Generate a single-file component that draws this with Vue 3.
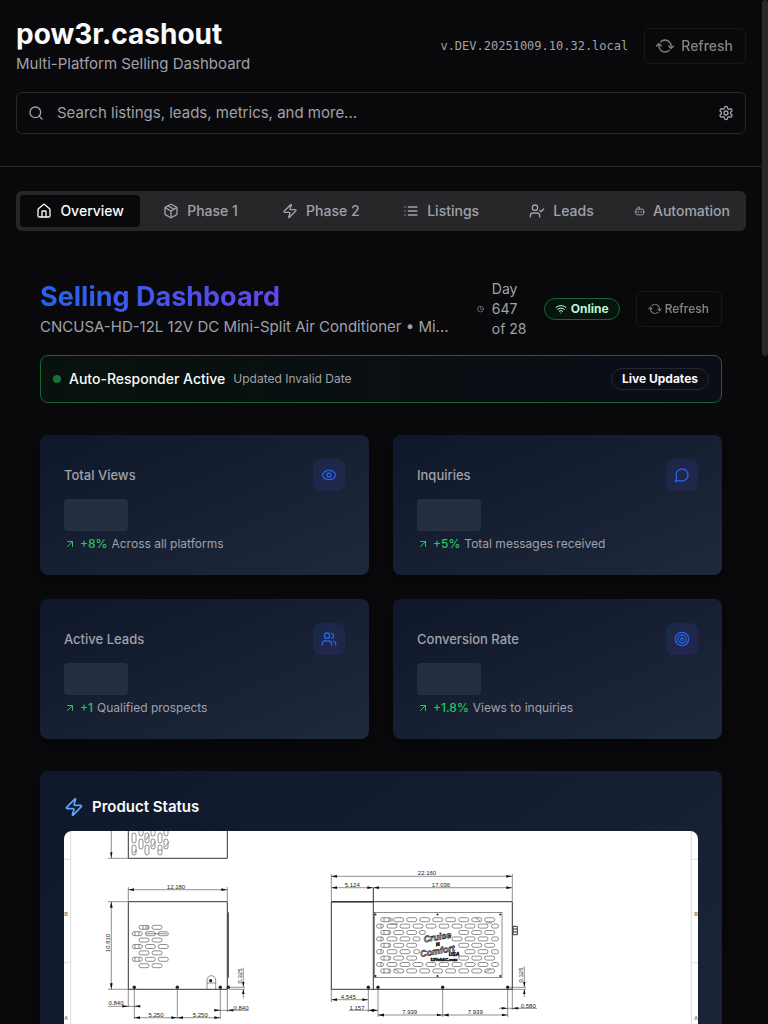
<script setup>
import { ref } from 'vue'

const icons = {
  home: '<path d="M15 21v-8a1 1 0 0 0-1-1h-4a1 1 0 0 0-1 1v8"/><path d="M3 10a2 2 0 0 1 .709-1.528l7-5.999a2 2 0 0 1 2.582 0l7 5.999A2 2 0 0 1 21 10v9a2 2 0 0 1-2 2H5a2 2 0 0 1-2-2z"/>',
  package: '<path d="M11 21.73a2 2 0 0 0 2 0l7-4A2 2 0 0 0 21 16V8a2 2 0 0 0-1-1.73l-7-4a2 2 0 0 0-2 0l-7 4A2 2 0 0 0 3 8v8a2 2 0 0 0 1 1.73z"/><path d="M12 22V12"/><path d="m3.3 7 8.7 5 8.7-5"/><path d="m7.5 4.27 9 5.15"/>',
  zap: '<path d="M4 14a1 1 0 0 1-.78-1.63l9.9-10.2a.5.5 0 0 1 .86.46l-1.92 6.02A1 1 0 0 0 13 10h7a1 1 0 0 1 .78 1.63l-9.9 10.2a.5.5 0 0 1-.86-.46l1.92-6.02A1 1 0 0 0 11 14z"/>',
  list: '<path d="M3 12h.01M3 18h.01M3 6h.01M8 12h13M8 18h13M8 6h13"/>',
  userCheck: '<path d="m16 11 2 2 4-4"/><path d="M16 21v-2a4 4 0 0 0-4-4H6a4 4 0 0 0-4 4v2"/><circle cx="9" cy="7" r="4"/>',
  bot: '<path d="M12 8V4H8"/><rect width="16" height="12" x="4" y="8" rx="2"/><path d="M2 14h2M20 14h2M15 13v2M9 13v2"/>',
  search: '<circle cx="11" cy="11" r="8"/><path d="m21 21-4.3-4.3"/>',
  settings: '<path d="M12.22 2h-.44a2 2 0 0 0-2 2v.18a2 2 0 0 1-1 1.73l-.43.25a2 2 0 0 1-2 0l-.15-.08a2 2 0 0 0-2.73.73l-.22.38a2 2 0 0 0 .73 2.73l.15.1a2 2 0 0 1 1 1.72v.51a2 2 0 0 1-1 1.74l-.15.09a2 2 0 0 0-.73 2.73l.22.38a2 2 0 0 0 2.73.73l.15-.08a2 2 0 0 1 2 0l.43.25a2 2 0 0 1 1 1.73V20a2 2 0 0 0 2 2h.44a2 2 0 0 0 2-2v-.18a2 2 0 0 1 1-1.73l.43-.25a2 2 0 0 1 2 0l.15.08a2 2 0 0 0 2.73-.73l.22-.39a2 2 0 0 0-.73-2.73l-.15-.08a2 2 0 0 1-1-1.74v-.5a2 2 0 0 1 1-1.74l.15-.09a2 2 0 0 0 .73-2.73l-.22-.38a2 2 0 0 0-2.73-.73l-.15.08a2 2 0 0 1-2 0l-.43-.25a2 2 0 0 1-1-1.73V4a2 2 0 0 0-2-2z"/><circle cx="12" cy="12" r="3"/>',
  refresh: '<path d="M3 12a9 9 0 0 1 9-9 9.75 9.75 0 0 1 6.74 2.74L21 8"/><path d="M21 3v5h-5"/><path d="M21 12a9 9 0 0 1-9 9 9.75 9.75 0 0 1-6.74-2.74L3 16"/><path d="M8 16H3v5"/>',
  clock: '<circle cx="12" cy="12" r="10"/><path d="M12 6v6l4 2"/>',
  wifi: '<path d="M12 20h.01"/><path d="M2 8.82a15 15 0 0 1 20 0"/><path d="M5 12.859a10 10 0 0 1 14 0"/><path d="M8.5 16.429a5 5 0 0 1 7 0"/>',
  arrow: '<path d="M7 7h10v10"/><path d="M7 17 17 7"/>',
  eye: '<path d="M2.062 12.348a1 1 0 0 1 0-.696 10.75 10.75 0 0 1 19.876 0 1 1 0 0 1 0 .696 10.75 10.75 0 0 1-19.876 0"/><circle cx="12" cy="12" r="3"/>',
  message: '<path d="M7.9 20A9 9 0 1 0 4 16.1L2 22Z"/>',
  users: '<path d="M16 21v-2a4 4 0 0 0-4-4H6a4 4 0 0 0-4 4v2"/><circle cx="9" cy="7" r="4"/><path d="M22 21v-2a4 4 0 0 0-3-3.87"/><path d="M16 3.13a4 4 0 0 1 0 7.75"/>',
  target: '<circle cx="12" cy="12" r="10"/><circle cx="12" cy="12" r="6"/><circle cx="12" cy="12" r="2"/>',
}

const tabs = [
  { label: 'Overview', icon: 'home' },
  { label: 'Phase 1', icon: 'package' },
  { label: 'Phase 2', icon: 'zap' },
  { label: 'Listings', icon: 'list' },
  { label: 'Leads', icon: 'userCheck' },
  { label: 'Automation', icon: 'bot' },
]
const active = ref('Overview')
const query = ref('')

const stats = [
  { title: 'Total Views', change: '+8%', note: 'Across all platforms', icon: 'eye' },
  { title: 'Inquiries', change: '+5%', note: 'Total messages received', icon: 'message' },
  { title: 'Active Leads', change: '+1', note: 'Qualified prospects', icon: 'users' },
  { title: 'Conversion Rate', change: '+1.8%', note: 'Views to inquiries', icon: 'target' },
]

/* Vent slots: centre x, centre y, width, height */
const slots = []
for (const [x, y] of [[70, 7], [83, 7], [96, 7], [70, 19], [83, 19], [96, 19], [77, 0], [89, 0], [102, 0], [77, 13], [89, 13], [102, 13]]) {
  slots.push([x, y, 4, 10])
}
for (let r = 0; r < 7; r++) {
  const xs = r % 2 ? [73.3, 86.3, 99.3] : [80, 93]
  xs.forEach((x) => slots.push([x, 96.3 + r * 6.4, 10, 4]))
}
/* Slots left out behind the brand mark, by row */
const gaps = { 2: [3, 4, 5], 3: [2, 3, 4], 4: [3, 4, 5], 5: [2, 3, 4, 5], 6: [3, 4, 5] }
for (let r = 0; r < 9; r++) {
  const y = 88.7 + r * 6.4
  const even = r % 2 === 0
  const skip = gaps[r] || []
  for (let i = 0; i < (even ? 9 : 8); i++) {
    if (!skip.includes(i)) slots.push([(even ? 321.7 : 328) + 13 * i, y, 10, 4])
  }
  if (!even) {
    slots.push([316, y, 7, 4])
    slots.push([431, y, 7, 4])
  }
}
slots.push([358.3, 101.5, 6, 4], [352.5, 107.9, 7, 4], [352.5, 120.7, 6, 4])

/* Dimension lines with an arrow at both ends: x1, y1, x2, y2 */
const dims = [
  [64.3, 58.7, 163.3, 58.7], [47.3, 70.7, 47.3, 158.3],
  [70.3, 186.7, 113.3, 186.7], [113.3, 186.7, 156.3, 186.7],
  [267.3, 45.3, 448.3, 45.3], [267.3, 56.7, 309.3, 56.7], [309.3, 56.7, 448.3, 56.7],
  [267.3, 168.7, 304.3, 168.7], [314, 184, 378.7, 184], [378.7, 184, 443.7, 184],
  [304.3, 179.3, 314, 179.3],
]
const feet = [70.3, 113.3, 156.3, 164.3, 304.3, 314, 378.7, 443.7]
const labels = [
  ['12.180', 112, 58], ['5.250', 92, 186], ['5.250', 136.3, 186], ['0.840', 52, 174], ['0.840', 177, 178.5],
  ['22.160', 363, 44], ['5.124', 288.3, 56], ['17.036', 377, 56], ['4.545', 284.3, 168],
  ['1.157', 293, 178.5], ['7.939', 345.7, 183], ['7.939', 411.3, 183], ['0.580', 464.3, 176.5],
]
const upright = [['10.810', 46, 112], ['0.325', 178, 145], ['0.325', 459, 144]]
</script>

<template>
  <div class="shell">
    <header class="top">
      <div class="bar">
        <div>
          <h1>pow3r.cashout</h1>
          <p class="sub">Multi-Platform Selling Dashboard</p>
        </div>
        <div class="tools">
          <span class="version">v.DEV.20251009.10.32.local</span>
          <button class="btn" type="button" disabled>
            <svg class="ic spin" viewBox="0 0 24 24" v-html="icons.refresh" />Refresh
          </button>
        </div>
      </div>
      <div class="search">
        <svg class="ic" viewBox="0 0 24 24" v-html="icons.search" />
        <input v-model="query" type="text" aria-label="Search" placeholder="Search listings, leads, metrics, and more..." />
        <button class="gear" type="button" aria-label="Settings">
          <svg class="ic" viewBox="0 0 24 24" v-html="icons.settings" />
        </button>
      </div>
    </header>

    <main>
      <nav class="tabs" role="tablist">
        <button
          v-for="t in tabs" :key="t.label" type="button" role="tab"
          :aria-selected="active === t.label" :class="{ on: active === t.label }" @click="active = t.label"
        >
          <svg class="ic" viewBox="0 0 24 24" v-html="icons[t.icon]" /><span>{{ t.label }}</span>
        </button>
      </nav>

      <div class="board">
        <div class="intro">
          <div class="heading">
            <h2>Selling Dashboard</h2>
            <p class="sub">CNCUSA-HD-12L 12V DC Mini-Split Air Conditioner • Mi...</p>
          </div>
          <div class="day">
            <svg class="ic" viewBox="0 0 24 24" v-html="icons.clock" />
            <span>Day 647 of 28</span>
          </div>
          <span class="pill online"><svg class="ic" viewBox="0 0 24 24" v-html="icons.wifi" />Online</span>
          <button class="btn small" type="button" disabled>
            <svg class="ic spin" viewBox="0 0 24 24" v-html="icons.refresh" />Refresh
          </button>
        </div>

        <div class="banner">
          <i class="dot" />
          <strong>Auto-Responder Active</strong>
          <span class="when">Updated Invalid Date</span>
          <span class="pill live">Live Updates</span>
        </div>

        <section class="stats">
          <article v-for="s in stats" :key="s.title" class="card">
            <div class="head">
              <h3>{{ s.title }}</h3>
              <span class="badge"><svg class="ic" viewBox="0 0 24 24" v-html="icons[s.icon]" /></span>
            </div>
            <div class="skeleton" />
            <p class="foot">
              <svg class="ic" viewBox="0 0 24 24" v-html="icons.arrow" />
              <b>{{ s.change }}</b><span>{{ s.note }}</span>
            </p>
          </article>
        </section>

        <section class="card product">
          <h3><svg class="ic" viewBox="0 0 24 24" v-html="icons.zap" />Product Status</h3>
          <div class="photo">
            <svg class="drawing" viewBox="0 0 634 400" role="img" aria-label="Unit dimensions">
              <defs>
                <marker id="tip" viewBox="0 0 6 4" refX="6" refY="2" markerWidth="6" markerHeight="4" markerUnits="userSpaceOnUse" orient="auto-start-reverse">
                  <path d="M0 0.6 6 2 0 3.4z" fill="#111" />
                </marker>
              </defs>
              <g class="frame">
                <path d="M6.7 0V400M627.3 0V400M0 28.3H6.7M0 131.7H6.7M627.3 28.3H634M627.3 131.7H634" />
              </g>
              <g class="edge">
                <path d="M64.3 0V27.3H163.3V0M64.3 70.7H163.3V158.3H64.3zM164.3 81.3V146.7" />
                <path d="M267.3 70.7H448.3V158.3H267.3zM309.3 57V158.3" />
                <path d="M449 95.3h4.3v8.4h-4.3zM449 98h4.3M449 101h4.3" />
                <path d="M267.3 70.7H309.3" stroke-width="1.4" />
              </g>
              <g class="thin">
                <rect x="310.3" y="81.3" width="127.7" height="65.4" />
                <path d="M47.3 0V27.3M44 27.3H64M44 70.7H64M44 158.3H64M64.3 56V70M163.3 56V70M64.3 158V176M70.3 158V188M113.3 158V188M156.3 158V188M163.3 158V181" />
                <path d="M267.3 43V70M448.3 43V70M267.3 158V171M304.3 158V181M314 158V186M378.7 158V186M443.7 158V186M448.3 158V179" />
                <path d="M44 175.3H75M150 179.3H185M285 179.3H304M435 177.3H473" />
                <path d="M179.3 136.7V156M179.3 159V167.3M165 156.3H181M165 158.3H181M460.3 135.3V156M460.3 159V166M446 156.3H462M446 158.3H462" />
                <path d="M143 158v-9a4.3 4.3 0 0 1 8.7 0v9M143 152h8.7" />
                <path d="M79 94.500v4M82 94.500v4M84 94.500v4M71 100.700v4M75 100.700v4M71 113.500v4M75 113.500v4M71 126.500v4M75 126.500v4M82 102.700H103M69 22l4-3M82 9l3-5M88 16l3-5M101 16l4-5M94 19h4M325 86.500v4.400M328 86.500v4.400M320 86.500v4.400M325 99.300v4.400M320 99.300v4.400M325 112v4.400M320 112v4.400M325 125v4.400M320 125v4.400M325 138v4.400M320 138v4.400M317 93v4M317 106v4M317 118.500v4M317 131.500v4M335 141l-5-3M421 141l6-3M412 87l4 3M422 92h6M326 93h8" />
                <rect v-for="(s, i) in slots" :key="i" :x="s[0] - s[2] / 2" :y="s[1] - s[3] / 2" :width="s[2]" :height="s[3]" rx="2" />
                <path v-for="(d, i) in dims" :key="'d' + i" :d="`M${d[0]} ${d[1]}L${d[2]} ${d[3]}`" marker-start="url(#tip)" marker-end="url(#tip)" />
              </g>
              <path d="M46.1 21.3h2.400l-1.200 6zM58.300 174.100v2.400l6-1.200zM76.300 174.100v2.400l-6-1.200zM150.300 178.100v2.400l6-1.200zM169.300 178.100v2.400l-6-1.200zM437.700 176.100v2.400l6-1.200zM454.300 176.100v2.400l-6-1.200zM178.100 151h2.400l-1.200 5zM178.100 163h2.400l-1.200-5zM459.100 151h2.400l-1.200 5zM459.100 163h2.400l-1.200-5z" fill="#111" />
              <circle v-for="x in feet" :key="x" :cx="x" cy="156.3" r="1.7" fill="#222" />
              <circle cx="146.7" cy="149.7" r="1.6" fill="#222" />
              <g fill="#222">
                <circle cx="311.5" cy="83.5" r="1" /><circle cx="373.5" cy="83.5" r="1" /><circle cx="436.3" cy="83.5" r="1" />
                <circle cx="311.5" cy="145" r="1" /><circle cx="373.5" cy="145" r="1" /><circle cx="436.3" cy="145" r="1" />
              </g>
              <g class="num">
                <text v-for="(l, i) in labels" :key="i" :x="l[1]" :y="l[2]">{{ l[0] }}</text>
                <text v-for="(l, i) in upright" :key="'u' + i" :transform="`translate(${l[1]} ${l[2]}) rotate(-90)`">{{ l[0] }}</text>
              </g>
              <g class="mark">
                <text transform="translate(374 109) rotate(-10)">Cruise</text>
                <text transform="translate(374 115) rotate(-10)" class="mid">N</text>
                <text transform="translate(374 123) rotate(-10)">Comfort</text>
                <text x="390" y="125" class="mid">USA</text>
                <text x="380" y="130" class="site">12VoltAC.com</text>
              </g>
              <g class="zone">
                <text x="2" y="85">B</text><text x="2" y="189">A</text>
                <text x="632" y="85">B</text><text x="632" y="189">A</text>
              </g>
            </svg>
          </div>
        </section>
      </div>
    </main>
    <div class="thumb" />
  </div>
</template>

<style>
body {
  background: #09090b;
}
</style>

<style scoped>
* {
  box-sizing: border-box;
}
.shell {
  height: 100vh;
  overflow: hidden;
  padding-right: 6px;
  background: #09090b;
  color: #fafafa;
  font-family: Inter, "Liberation Sans", sans-serif;
  font-size: 14px;
  line-height: 20px;
}
h1, h2, h3, p {
  margin: 0;
}
button {
  font: inherit;
  color: inherit;
  background: none;
  border: 0;
  padding: 0;
}
.ic {
  width: 16px;
  height: 16px;
  fill: none;
  stroke: currentColor;
  stroke-width: 2;
  stroke-linecap: round;
  stroke-linejoin: round;
}
.top {
  padding: 16px 16px 32px;
  border-bottom: 1px solid #27272a;
}
.bar {
  display: flex;
  justify-content: space-between;
  align-items: center;
}
h1 {
  font-size: 28px;
  line-height: 36px;
  font-weight: 700;
}
.sub {
  font-size: 15px;
  line-height: 24px;
  color: #a1a1aa;
  white-space: nowrap;
}
.tools {
  display: flex;
  align-items: center;
  gap: 16px;
}
.version {
  font: 12px/16px "DejaVu Sans Mono", monospace;
  color: #a1a1aa;
}
.btn {
  display: flex;
  align-items: center;
  gap: 8px;
  height: 36px;
  padding: 0 12px;
  border: 1px solid #27272a;
  border-radius: 6px;
  font-weight: 500;
  opacity: 0.5;
}
.spin {
  transform: rotate(45deg);
  overflow: visible;
}
.search {
  display: flex;
  align-items: center;
  height: 42px;
  margin-top: 16px;
  padding: 0 11px;
  border: 1px solid #27272a;
  border-radius: 6px;
  color: #a1a1aa;
}
.search input {
  flex: 1;
  min-width: 0;
  margin-left: 13px;
  padding: 0;
  border: 0;
  outline: 0;
  background: none;
  color: #fafafa;
  font: inherit;
  font-size: 15px;
}
.search input::placeholder {
  color: #a1a1aa;
  opacity: 1;
}
.gear {
  display: flex;
}
main {
  padding: 24px 16px 0;
}
.tabs {
  display: grid;
  grid-template-columns: repeat(6, 1fr);
  height: 40px;
  padding: 4px;
  border-radius: 6px;
  background: #27272a;
  color: #a1a1aa;
}
.tabs button {
  display: flex;
  align-items: center;
  justify-content: center;
  gap: 8px;
  min-width: 0;
  padding: 0 12px;
  border-radius: 4px;
  font-weight: 500;
}
.tabs .ic {
  min-width: 0;
}
.tabs .on {
  background: #09090b;
  color: #fafafa;
}
.board {
  display: flex;
  flex-direction: column;
  padding: 48px 24px 0;
}
.intro {
  display: flex;
  align-items: center;
}
.heading {
  flex: 1;
  min-width: 0;
}
h2 {
  width: fit-content;
  font-size: 27px;
  line-height: 36px;
  font-weight: 700;
  background: linear-gradient(90deg, #2563eb, #7c3aed 140%);
  background-clip: text;
  -webkit-background-clip: text;
  color: transparent;
}
.day {
  display: flex;
  align-items: center;
  gap: 8px;
  margin: 0 16px;
  color: #a1a1aa;
}
.day span {
  width: 36px;
}
.day .ic {
  width: 7px;
}
.pill {
  display: flex;
  align-items: center;
  height: 22px;
  padding: 0 10px;
  border: 1px solid #27272a;
  border-radius: 11px;
  font-size: 12px;
  font-weight: 700;
}
.online {
  gap: 4px;
  margin-right: 16px;
  border-color: #166534;
  background: #07150e;
  color: #bbf7d0;
}
.online .ic {
  width: 12px;
  height: 12px;
}
.small {
  gap: 4px;
  font-size: 12px;
}
.small .ic {
  width: 12px;
  height: 12px;
}
.banner {
  display: flex;
  align-items: center;
  gap: 8px;
  height: 48px;
  margin-top: 16px;
  padding: 0 12px;
  border: 1px solid #166534;
  border-radius: 8px;
  background: linear-gradient(90deg, #08120d, #0c0d18);
}
.banner strong {
  font-weight: 500;
}
.dot {
  width: 8px;
  height: 8px;
  border-radius: 50%;
  background: #197138;
}
.when {
  font-size: 12px;
  color: #a1a1aa;
}
.live {
  margin-left: auto;
}
.stats {
  display: grid;
  grid-template-columns: 1fr 1fr;
  gap: 24px;
  margin-top: 32px;
}
.card {
  padding: 24px;
  border-radius: 8px;
  background: linear-gradient(to bottom right, #0f172a, #1e293b);
  box-shadow: 0 10px 15px -3px rgba(0, 0, 0, 0.1), 0 4px 6px -4px rgba(0, 0, 0, 0.1);
}
.head {
  display: flex;
  align-items: center;
  justify-content: space-between;
}
.head h3 {
  font-size: 13px;
  font-weight: 500;
  color: #a1a1aa;
}
.badge {
  display: flex;
  padding: 8px;
  border-radius: 8px;
  background: linear-gradient(135deg, rgba(37, 99, 235, 0.12), rgba(124, 58, 237, 0.12));
  color: #2563eb;
}
.skeleton {
  width: 64px;
  height: 32px;
  margin-top: 8px;
  border-radius: 4px;
  background: #243041;
}
.foot {
  display: flex;
  align-items: center;
  gap: 4px;
  margin-top: 5px;
  margin-bottom: -1px;
  font-size: 12px;
  line-height: 16px;
  color: #a1a1aa;
}
.foot b {
  font-weight: 500;
  color: #22c55e;
}
.foot .ic {
  width: 12px;
  height: 12px;
  color: #22c55e;
}
.product {
  margin-top: 32px;
}
.product h3 {
  display: flex;
  align-items: center;
  gap: 8px;
  font-size: 15px;
  line-height: 24px;
  font-weight: 600;
}
.product h3 .ic {
  width: 20px;
  height: 20px;
  color: #60a5fa;
}
.photo {
  margin-top: 12px;
  border-radius: 8px;
  overflow: hidden;
  background: #fff;
}
.drawing {
  display: block;
  width: 100%;
}
.frame path {
  fill: none;
  stroke: #ddd;
  stroke-width: 1;
}
.edge path {
  fill: none;
  stroke: #333;
}
.thin path,
.thin rect {
  fill: none;
  stroke: #444;
  stroke-width: 0.6;
}
.drawing text {
  text-anchor: middle;
}
.num text {
  font: 6px "Liberation Sans", sans-serif;
  fill: #222;
}
.mark text {
  font: italic 700 9px "Liberation Sans", sans-serif;
  fill: #ccc;
  stroke: #222;
  stroke-width: 0.6;
}
.mark .mid {
  font-size: 5px;
  fill: #222;
}
.mark .site {
  font: 700 4px "Liberation Sans", sans-serif;
  fill: #000;
}
.zone text {
  font: 700 5px "Liberation Sans", sans-serif;
  fill: #777;
}
.thumb {
  position: fixed;
  top: 0;
  right: 0;
  width: 6px;
  height: 356px;
  border-radius: 3px;
  background: #27272a;
}
</style>
